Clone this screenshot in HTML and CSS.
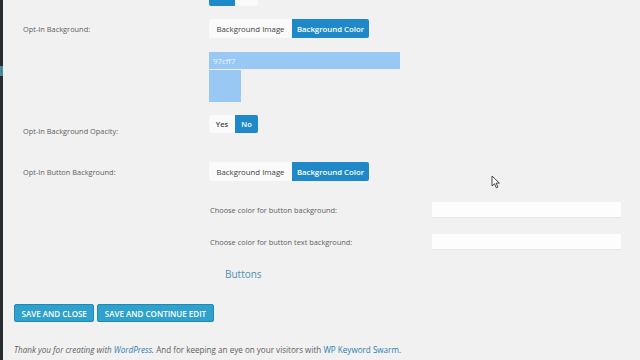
FILE: index.html
```html
<!DOCTYPE html>
<html>
<head>
<meta charset="utf-8">
<link rel="stylesheet" href="styles.css">
</head>
<body>
<div class="page">
  <aside class="edge"><span class="edge-hl"></span></aside>
  <main class="content">
    <div class="row row-top">
      <div class="label"></div>
      <div class="toggle"><span class="seg on w-yes"></span><span class="seg w-no"></span></div>
    </div>
    <div class="row row-bg">
      <div class="label">Opt-In Background:</div>
      <div class="group">
        <span class="gbtn">Background Image</span><span class="gbtn active">Background Color</span>
      </div>
    </div>
    <div class="row row-picker">
      <div class="label"></div>
      <div class="picker">
        <div class="picker-input">97cff7</div>
        <div class="picker-swatch"></div>
      </div>
    </div>
    <div class="row row-opacity">
      <div class="label label-low">Opt-In Background Opacity:</div>
      <div class="toggle"><span class="seg w-yes">Yes</span><span class="seg on w-no">No</span></div>
    </div>
    <div class="row row-btnbg">
      <div class="label">Opt-In Button Background:</div>
      <div class="group">
        <span class="gbtn">Background Image</span><span class="gbtn active">Background Color</span>
      </div>
    </div>
    <div class="sub sub-1">
      <div class="sub-label">Choose color for button background:</div>
      <div class="sub-input"></div>
    </div>
    <div class="sub sub-2">
      <div class="sub-label">Choose color for button text background:</div>
      <div class="sub-input"></div>
    </div>
    <h3 class="section">Buttons</h3>
    <div class="actions">
      <button class="save">SAVE AND CLOSE</button>
      <button class="save">SAVE AND CONTINUE EDIT</button>
    </div>
    <p class="footer"><em>Thank you for creating with <a>WordPress</a>.</em> And for keeping an eye on your visitors with <a>WP Keyword Swarm</a>.</p>
  </main>
</div>
<svg class="cursor" width="10" height="14" viewBox="0 0 10 14"><path d="M1 1 L1 11 L3.5 8.7 L5.3 12.8 L6.9 12.1 L5.1 8.1 L8.4 8.1 Z" fill="#fff" stroke="#333" stroke-width="0.9" stroke-linejoin="round"/></svg>
</body>
</html>
```
FILE: styles.css
```css
html, body {
  margin: 0;
  padding: 0;
  background: #f1f1f1;
  font-family: "Open Sans", "Noto Sans", sans-serif;
  color: #555;
  overflow: hidden;
}
.page {
  display: flex;
  width: 640px;
  height: 360px;
  overflow: hidden;
}
.edge {
  width: 3px;
  flex: none;
  background: #2a2d30;
  display: flex;
  flex-direction: column;
}
.edge-hl {
  display: block;
  margin-top: 66px;
  height: 10px;
  background: #4a8a96;
}
.content {
  flex: 1;
  margin-top: -12px;
}
.row {
  display: flex;
  align-items: center;
}
.label {
  width: 206px;
  padding-left: 20px;
  box-sizing: border-box;
  flex: none;
  font-size: 7.4px;
  line-height: 10px;
  color: #5f5f5f;
}
.toggle {
  display: flex;
  height: 18px;
  border-radius: 2px;
  overflow: hidden;
}
.seg {
  display: flex;
  align-items: center;
  justify-content: center;
  background: #fafafa;
  font-size: 7.5px;
  font-weight: 600;
  color: #444;
}
.seg.on { background: #1e88c8; color: #fff; }
.w-yes { width: 26px; }
.w-no { width: 23px; }
.row-bg { margin-top: 13px; }
.group {
  display: flex;
  height: 19px;
  border-radius: 2px;
  overflow: hidden;
}
.gbtn {
  display: flex;
  align-items: center;
  justify-content: center;
  background: #fafafa;
  font-size: 7.8px;
  color: #3f3f3f;
  width: 83px;
  box-sizing: border-box;
}
.gbtn.active {
  background: #1e88c8;
  color: #fff;
  font-weight: 600;
  width: 77px;
}
.row-picker { margin-top: 14px; align-items: flex-start; }
.picker { display: flex; flex-direction: column; gap: 1px; }
.picker-input {
  width: 191px;
  height: 17px;
  box-sizing: border-box;
  background: #98c8f3;
  color: #eef6ff;
  font-size: 7.8px;
  padding-left: 4px;
  display: flex;
  align-items: center;
}
.picker-swatch {
  width: 32px;
  height: 32px;
  background: #98c8f3;
}
.row-opacity { margin-top: 13px; align-items: flex-start; }
.label-low { padding-top: 11px; }
.row-btnbg { margin-top: 26px; }
.sub {
  display: flex;
  align-items: center;
  padding-left: 207px;
}
.sub-label {
  width: 222px;
  flex: none;
  font-size: 7.4px;
  color: #5f5f5f;
}
.sub-input {
  width: 189px;
  height: 16px;
  background: #fdfdfd;
  border-bottom: 1px solid #e6e6e6;
  box-sizing: border-box;
}
.sub-1 { margin-top: 21px; }
.sub-2 { margin-top: 16px; }
.section {
  margin: 17px 0 0 222px;
  font-size: 10px;
  font-weight: 400;
  color: #4f8fae;
  line-height: 14px;
}
.actions {
  display: flex;
  gap: 3px;
  margin: 23px 0 0 11px;
}
.save {
  height: 18px;
  padding: 0 6.5px;
  background: #2ea1cc;
  border: 1px solid #1b8bb6;
  border-radius: 2px;
  color: #fff;
  font-family: inherit;
  font-size: 8px;
  font-weight: 600;
  box-sizing: border-box;
}
.footer {
  margin: 23px 0 0 11px;
  font-size: 8.1px;
  color: #5f5f5f;
  line-height: 10px;
  white-space: nowrap;
}
.footer a { color: #2a7fb0; }
.cursor {
  position: absolute;
  left: 491px;
  top: 175px;
}
```
